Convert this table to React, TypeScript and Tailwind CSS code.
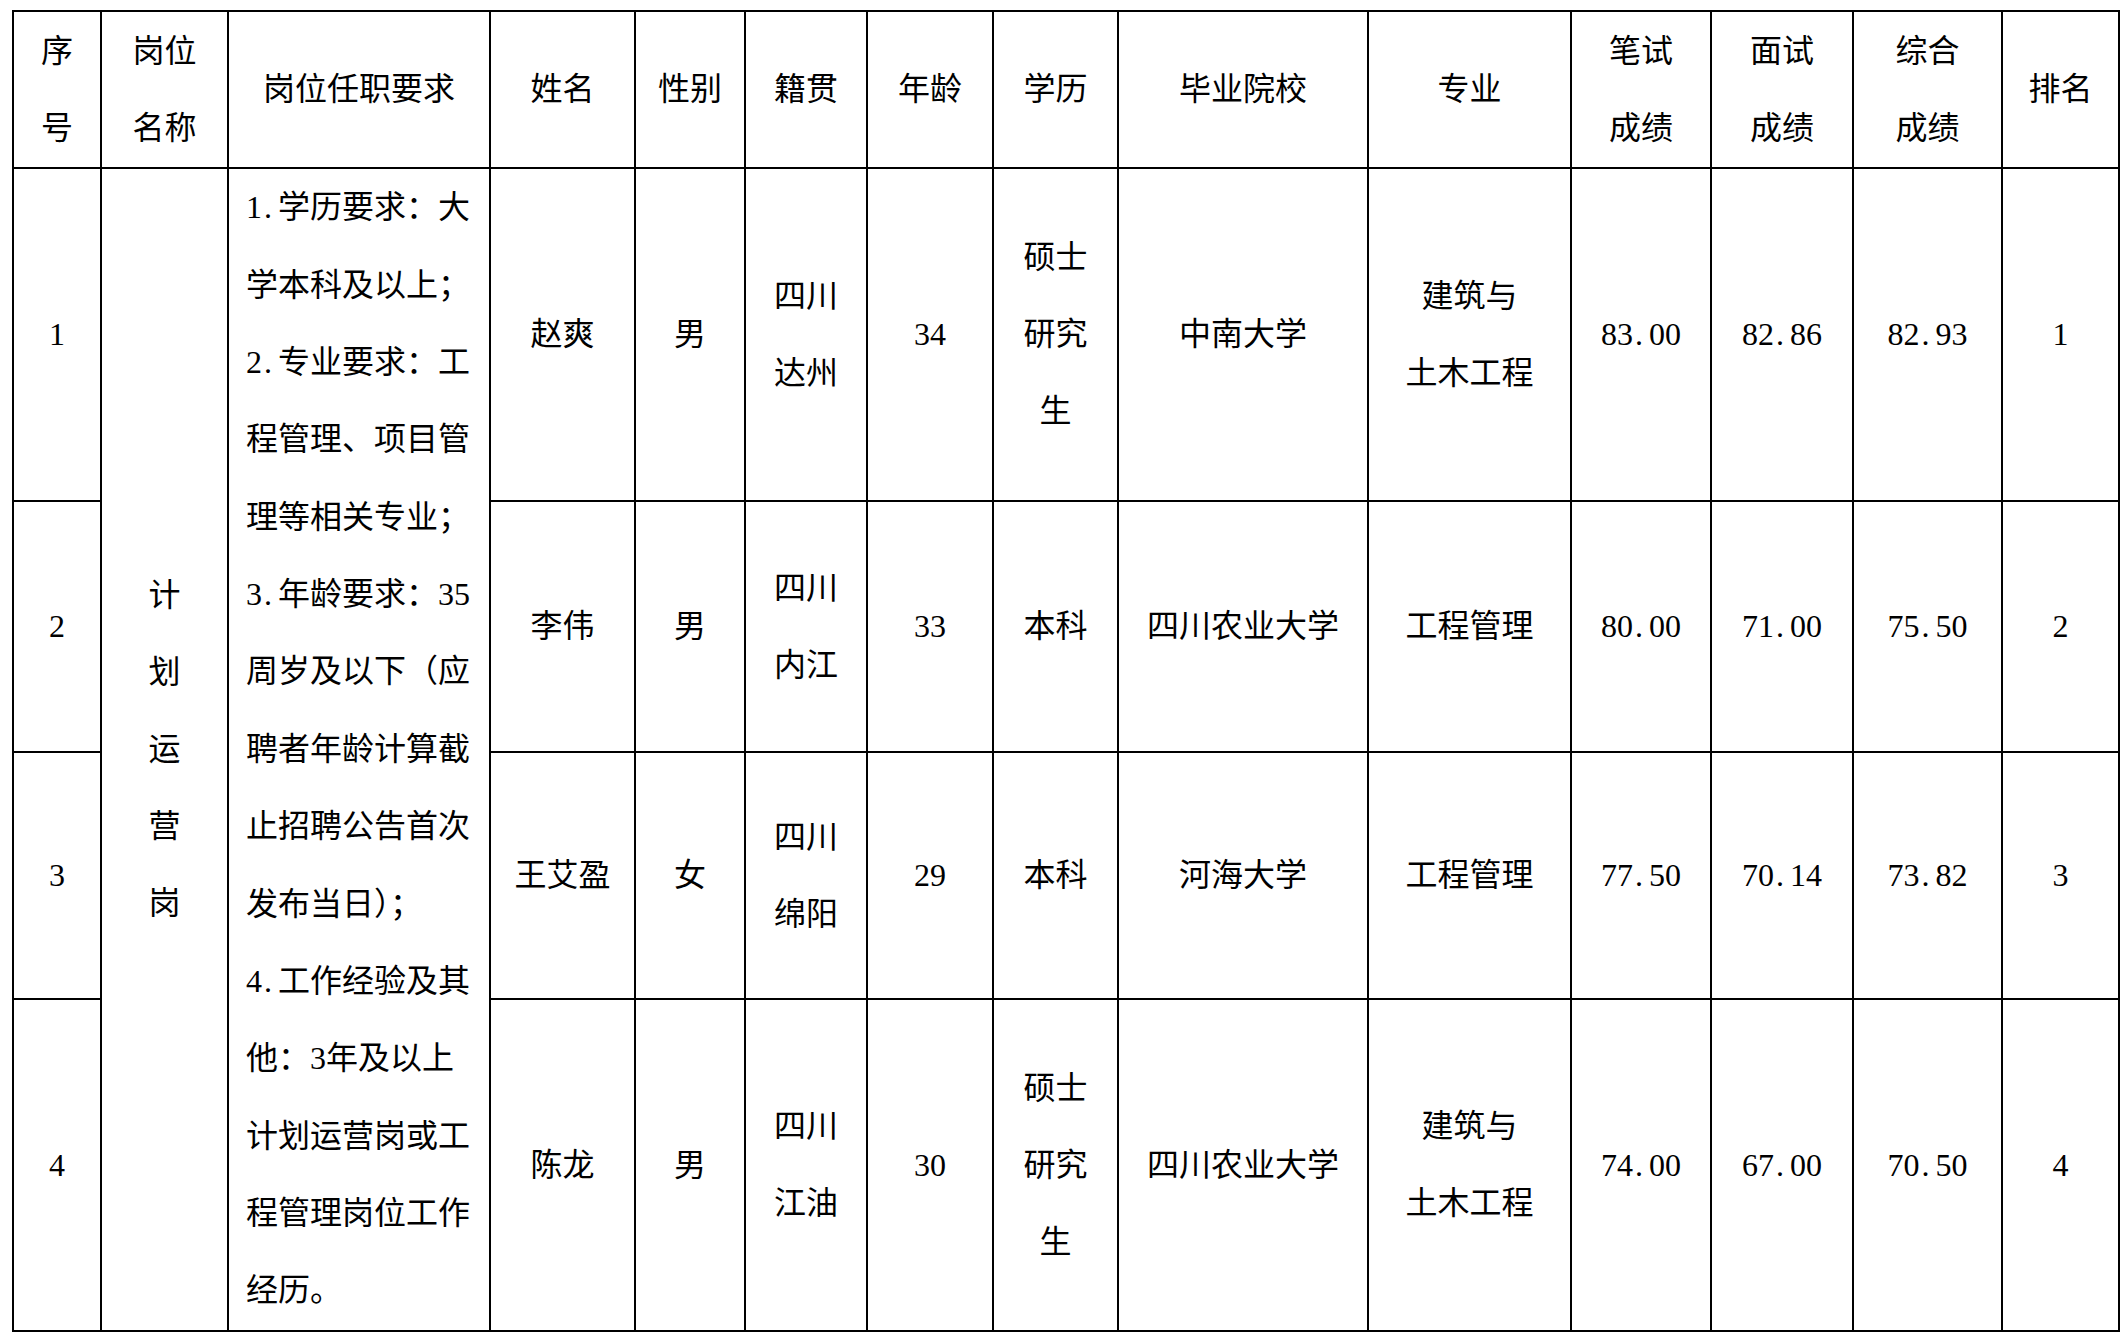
import type { ReactNode } from "react"

type Cell = string | string[]

const headers: Cell[] = [
  ["序", "号"],
  ["岗位", "名称"],
  "岗位任职要求",
  "姓名",
  "性别",
  "籍贯",
  "年龄",
  "学历",
  "毕业院校",
  "专业",
  ["笔试", "成绩"],
  ["面试", "成绩"],
  ["综合", "成绩"],
  "排名",
]

const requirements = [
  "1.学历要求：大",
  "学本科及以上；",
  "2.专业要求：工",
  "程管理、项目管",
  "理等相关专业；",
  "3.年龄要求：35",
  "周岁及以下（应",
  "聘者年龄计算截",
  "止招聘公告首次",
  "发布当日）；",
  "4.工作经验及其",
  "他：3年及以上",
  "计划运营岗或工",
  "程管理岗位工作",
  "经历。",
]

const rows: { no: string; rest: Cell[] }[] = [
  {
    no: "1",
    rest: ["赵爽", "男", ["四川", "达州"], "34", ["硕士", "研究", "生"], "中南大学", ["建筑与", "土木工程"], "83.00", "82.86", "82.93", "1"],
  },
  {
    no: "2",
    rest: ["李伟", "男", ["四川", "内江"], "33", "本科", "四川农业大学", "工程管理", "80.00", "71.00", "75.50", "2"],
  },
  {
    no: "3",
    rest: ["王艾盈", "女", ["四川", "绵阳"], "29", "本科", "河海大学", "工程管理", "77.50", "70.14", "73.82", "3"],
  },
  {
    no: "4",
    rest: ["陈龙", "男", ["四川", "江油"], "30", ["硕士", "研究", "生"], "四川农业大学", ["建筑与", "土木工程"], "74.00", "67.00", "70.50", "4"],
  },
]

// the original font gives "." a half-width cell, so pad it out
function withDots(s: string): ReactNode {
  const parts = s.split(".")
  return parts.map((p, i) => (
    <span key={i}>
      {p}
      {i < parts.length - 1 && <span className="inline-block w-[16px] pl-[2px] text-left">.</span>}
    </span>
  ))
}

function Centered({ value }: { value: Cell }) {
  const lines = Array.isArray(value) ? value : [value]
  return (
    <div className="flex flex-col items-center justify-center bg-white text-center">
      {lines.map((l, i) => (
        <div key={i} className="whitespace-nowrap">
          {withDots(l)}
        </div>
      ))}
    </div>
  )
}

export default function App() {
  return (
    <div
      className="min-h-screen bg-white pl-[12px] pt-[10px] text-[32px] leading-[77px] text-black"
      style={{ fontFamily: '"Liberation Serif", "Noto Sans CJK SC", serif' }}
    >
      <div className="grid w-fit grid-cols-[86px_125px_260px_143px_108px_120px_124px_123px_248px_201px_138px_140px_147px_115px] grid-rows-[155px_331px_249px_245px_330px] gap-[2px] border-2 border-black bg-black">
        {headers.map((h, i) => (
          <Centered key={`h${i}`} value={h} />
        ))}

        {rows.map((r, ri) => (
          <div key={`r${ri}`} className="contents">
            <Centered value={r.no} />
            {ri === 0 && (
              <>
                <div className="row-span-4 flex flex-col items-center justify-center bg-white">
                  {["计", "划", "运", "营", "岗"].map((c) => (
                    <div key={c}>{c}</div>
                  ))}
                </div>
                <div className="row-span-4 flex flex-col justify-center bg-white pl-[17px] leading-[77.35px]">
                  {requirements.map((l) => (
                    <div key={l} className="whitespace-nowrap">
                      {withDots(l)}
                    </div>
                  ))}
                </div>
              </>
            )}
            {r.rest.map((c, ci) => (
              <Centered key={ci} value={c} />
            ))}
          </div>
        ))}
      </div>
    </div>
  )
}
